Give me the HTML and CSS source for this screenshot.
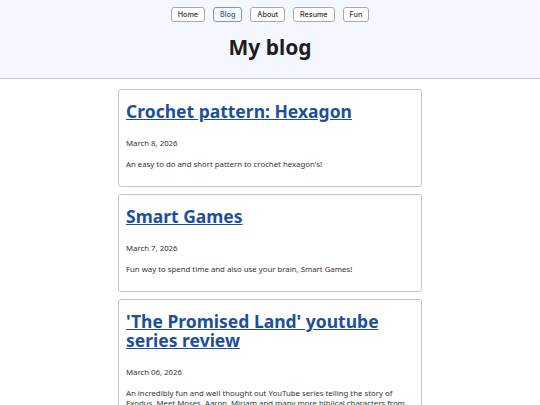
FILE: index.html
```html
<!DOCTYPE html>
<html lang="en">
<head>
    <meta charset="UTF-8">
    <meta name="viewport" content="width=device-width, initial-scale=1.0">
    <title>My blog</title>
    <link rel="stylesheet" href="styles.css">
</head>
<body>
    <header class="site-header">
        <nav class="nav">
            <a class="nav-btn" href="#">Home</a>
            <a class="nav-btn active" href="#">Blog</a>
            <a class="nav-btn" href="#">About</a>
            <a class="nav-btn" href="#">Resume</a>
            <a class="nav-btn" href="#">Fun</a>
        </nav>
        <h1>My blog</h1>
    </header>

    <main class="posts">
        <article class="post">
            <h2><a href="#">Crochet pattern: Hexagon</a></h2>
            <p class="date">March 8, 2026</p>
            <p>An easy to do and short pattern to crochet hexagon's!</p>
        </article>
        <article class="post">
            <h2><a href="#">Smart Games</a></h2>
            <p class="date">March 7, 2026</p>
            <p>Fun way to spend time and also use your brain, Smart Games!</p>
        </article>
        <article class="post">
            <h2><a href="#">'The Promised Land' youtube series review</a></h2>
            <p class="date">March 06, 2026</p>
            <p>An incredibly fun and well thought out YouTube series telling the story of Exodus. Meet Moses, Aaron, Miriam and many more biblical characters from the Old Testament.</p>
        </article>
    </main>
</body>
</html>
```

FILE: styles.css
```css
body {
    margin: 0;
    font-family: "Noto Sans", sans-serif;
    color: #222;
    background: #fff;
}
.site-header {
    background: #f4f7fe;
    border-bottom: 1px solid #c8c8cc;
    padding-top: 7px;
    text-align: center;
}
.nav {
    display: flex;
    justify-content: center;
    gap: 8px;
}
.nav-btn {
    font-family: Inter, sans-serif;
    font-size: 7.2px;
    font-weight: 500;
    color: #333;
    text-decoration: none;
    border: 1px solid #a8a8b0;
    border-radius: 3px;
    background: #fff;
    padding: 3px 6px;
    line-height: 7px;
}
.nav-btn.active {
    color: #3a5a9a;
    border-color: #7f94bd;
    background: #f6f8fd;
}
h1 {
    margin: 0;
    padding: 13px 0 19px;
    font-size: 21px;
    line-height: 24px;
    color: #1e1e1e;
}
.posts {
    width: 304px;
    margin: 10px auto 0;
    display: flex;
    flex-direction: column;
    gap: 7px;
}
.post {
    border: 1px solid #c4c4c8;
    border-radius: 3px;
    padding: 12px 7px 17px;
}
.post h2 {
    margin: 0;
    font-size: 17.5px;
    line-height: 19px;
}
.post h2 a {
    color: #1c4f9c;
}
.post p {
    margin: 11px 0 0;
    font-size: 7.8px;
    line-height: 10px;
    color: #333;
}
.post p.date {
    margin-top: 17px;
}
```
